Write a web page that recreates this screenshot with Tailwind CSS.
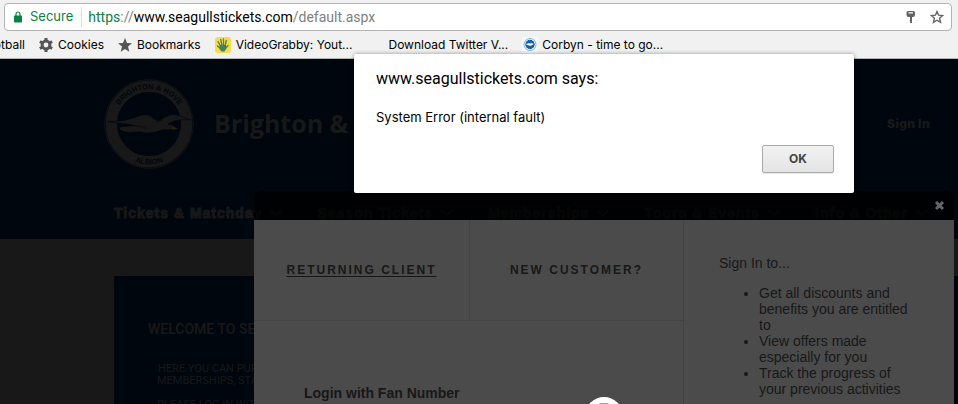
<!DOCTYPE html>
<html lang="en">

<head>
    <meta charset="UTF-8">
    <meta name="viewport" content="width=device-width, initial-scale=1.0">
    <title>Seagulls Tickets</title>
    <script src="https://cdn.jsdelivr.net/npm/@tailwindcss/browser@4"></script>
</head>

<body class="flex h-screen flex-col overflow-hidden bg-[#181818] font-['Liberation_Sans',sans-serif]">
    <!-- browser toolbar -->
    <div class="shrink-0 border-b border-[#b4b4b4] bg-[#f1f1f1] pt-[3px] text-black">
        <div class="ml-1 mr-[6px] flex h-7 items-center rounded border border-[#b4b4b4] bg-white pl-[9px] pr-[7px]">
            <svg class="h-3 w-2 shrink-0" viewBox="0 0 8 12" aria-hidden="true">
                <path d="M2 5V3a2 2 0 0 1 4 0v2" fill="none" stroke="#0b8043" stroke-width="1.2" />
                <rect y="4.5" width="8" height="7" rx="0.7" fill="#0b8043" />
            </svg>
            <span class="ml-2 font-['Inter',sans-serif] text-[13px] text-[#0b8043]">Secure</span>
            <span class="ml-2 mr-[6px] h-5 w-px bg-[#dcdcdc]"></span>
            <label for="address" class="sr-only">Address</label>
            <div class="relative flex-1 font-['Roboto',sans-serif] text-sm leading-5">
                <input id="address" type="text" value="https://www.seagullstickets.com/default.aspx" class="block w-full bg-transparent text-transparent outline-none">
                <div class="pointer-events-none absolute inset-0 whitespace-nowrap" aria-hidden="true"><span class="text-[#0b8043]">https</span><span class="text-[#808080]">://</span>www.seagullstickets.com<span class="text-[#808080]">/default.aspx</span></div>
            </div>
            <button type="button" aria-label="Saved passwords" class="mr-[14px]">
                <svg class="h-3 w-[10px]" viewBox="0 0 10 12">
                    <path fill="#636363" fill-rule="evenodd" d="M2 0h5.500A1.500 1.500 0 0 1 9 1.500V4a2 2 0 0 1-2 2H6v6H4.500l-1-1 1-.7-1-.8.5-.5V6H2.500A2 2 0 0 1 .5 4V1.500A1.500 1.500 0 0 1 2 0zM2.500 1.200v1.200h4.500V1.200z" />
                </svg>
            </button>
            <button type="button" aria-label="Bookmark this page">
                <svg class="size-[14px]" viewBox="0 0 14 14">
                    <path fill="none" stroke="#636363" stroke-width="1.4" d="M7 1.500l1.600 3.700 4 .4-3 2.700.9 4L7 10.200l-3.500 2.100.9-4-3-2.700 4-.4z" />
                </svg>
            </button>
        </div>
        <nav class="flex h-[27px] items-center overflow-hidden whitespace-nowrap font-['Inter',sans-serif] text-xs" aria-label="Bookmarks bar">
            <a href="#" class="flex w-[25px] justify-end">Football</a>
            <a href="#" class="ml-[14px] flex items-center gap-[5px]">
                <svg class="size-[14px]" viewBox="0 0 14 14" aria-hidden="true">
                    <circle cx="7" cy="7" r="3.900" fill="none" stroke="#555" stroke-width="3" />
                    <path d="M7 0v3M7 11v3M.9 3.500l2.600 1.500M10.500 9l2.600 1.500M.9 10.500L3.500 9M10.500 5l2.600-1.500" stroke="#555" stroke-width="3" />
                </svg>
                Cookies
            </a>
            <a href="#" class="ml-[14px] flex items-center gap-[5px]">
                <svg class="size-[14px]" viewBox="0 0 14 14" aria-hidden="true">
                    <path fill="#555" d="M7 0l2 5 5 .3-4 3.300 1.300 5.100L7 11l-4.300 2.700L4 8.600 0 5.300 5 5z" />
                </svg>
                Bookmarks
            </a>
            <a href="#" class="ml-[14px] flex items-center gap-[5px]">
                <svg class="size-4" viewBox="0 0 16 16" aria-hidden="true">
                    <rect width="16" height="16" rx="3" fill="#fbdb45" />
                    <g stroke="#3c8468" stroke-width="1.300" stroke-linecap="round" fill="none">
                        <path d="M5.500 9L3 4.500M7 8.500L5.700 2.500M8.500 8.500V2M10 9l1.300-5.500M5.500 11.500L2.500 9M10 12l3-3.500" />
                    </g>
                    <path fill="#3c8468" d="M4.500 8h6.500l.5 3-2 3.500H6.500L4.500 12z" />
                </svg>
                VideoGrabby: Yout...
            </a>
            <a href="#" class="ml-9">Download Twitter V...</a>
            <a href="#" class="ml-[14px] flex items-center gap-1">
                <svg class="size-4" viewBox="0 0 16 16" aria-hidden="true">
                    <rect width="16" height="16" fill="#f8f8f8" />
                    <circle cx="8" cy="7.500" r="6" fill="#fff" stroke="#86afd0" />
                    <circle cx="8" cy="7.500" r="4.700" fill="#1461a5" />
                    <path fill="#fff" d="M4 7c2-.6 2.500-1 4-.4 1.500-.6 2.500-.4 4 .3-1.500 0-2 1.800-3.500 1.800S5 8.200 4 7z" />
                </svg>
                Corbyn - time to go...
            </a>
        </nav>
    </div>

    <main class="relative min-h-0 flex-1 overflow-hidden">
        <header class="flex h-[180px] flex-col justify-between bg-[#00060e] pb-4 pl-[104px] pr-7 pt-5 text-[#181818]">
            <div class="flex items-center">
                <svg class="size-[90px] shrink-0" viewBox="0 0 90 90" role="img" aria-label="Brighton and Hove Albion">
                    <defs>
                        <path id="top-arc" d="M10 45a35 35 0 0 1 70 0" />
                        <path id="bottom-arc" d="M4.500 45a40.500 40.500 0 0 0 81 0" />
                    </defs>
                    <circle cx="45" cy="45" r="44.400" fill="none" stroke="#181818" stroke-width="0.700" />
                    <circle cx="45" cy="45" r="37.700" fill="none" stroke="#181818" stroke-width="11.400" />
                    <g fill="#00060e" font-family="Liberation Sans" font-size="7.500" font-weight="bold" text-anchor="middle">
                        <text><textPath href="#top-arc" startOffset="50%">BRIGHTON &amp; HOVE</textPath></text>
                        <text><textPath href="#bottom-arc" startOffset="50%">ALBION</textPath></text>
                    </g>
                    <path fill="#181818" stroke="#00060e" stroke-width="0.600" d="M4 42.500c10 0 19-1 27-4 6-3 12-4 16-1 3 2 5 4 8 4.500 5-4 11-7 17-6 5 1 9 3 15 5-9-1-18 0-23 4 4 .5 6 2 9 5-5 1.500-10 0-15 1-8 3-14 4-21 2-7-.5-13 2-19-1-4-2-3-4.500 1-4.500l12-1c-8-2-18-2-27-4z" />
                    <path fill="#2b2008" d="M68 47l6 3-6 .5z" />
                    <path fill="none" stroke="#00060e" stroke-width="0.600" d="M29 46.500c6 1 10 1 13 3M52 43l6-2" />
                </svg>
                <h1 class="ml-5 font-['Open_Sans',sans-serif] text-[25px] font-bold">Brighton &amp; Hove Albion</h1>
                <a href="#" class="ml-auto font-['Inter',sans-serif] text-xs font-black tracking-wide">Sign In</a>
            </div>
            <nav class="ml-[10px] flex gap-[35px] whitespace-nowrap text-sm font-black tracking-[1px] [-webkit-text-stroke:1px]" aria-label="Main">
                <a href="#" class="flex items-center gap-2">Tickets &amp; Matchday
                    <svg class="h-[6px] w-3" viewBox="0 0 12 6"><path d="M0 0l6 5 6-5" fill="none" stroke="currentColor" stroke-width="1.500" /></svg></a>
                <a href="#" class="flex items-center gap-2">Season Tickets
                    <svg class="h-[6px] w-3" viewBox="0 0 12 6"><path d="M0 0l6 5 6-5" fill="none" stroke="currentColor" stroke-width="1.500" /></svg></a>
                <a href="#" class="flex items-center gap-2">Memberships
                    <svg class="h-[6px] w-3" viewBox="0 0 12 6"><path d="M0 0l6 5 6-5" fill="none" stroke="currentColor" stroke-width="1.500" /></svg></a>
                <a href="#" class="flex items-center gap-2">Tours &amp; Events
                    <svg class="h-[6px] w-3" viewBox="0 0 12 6"><path d="M0 0l6 5 6-5" fill="none" stroke="currentColor" stroke-width="1.500" /></svg></a>
                <a href="#" class="flex items-center gap-2">Info &amp; Other
                    <svg class="h-[6px] w-3" viewBox="0 0 12 6"><path d="M0 0l6 5 6-5" fill="none" stroke="currentColor" stroke-width="1.500" /></svg></a>
            </nav>
        </header>

        <section class="ml-[114px] mt-[37px] flex h-60 flex-col bg-[#00060e] pt-[43px] font-['Roboto',sans-serif] text-[#181818]">
            <div class="w-[280px] whitespace-nowrap pl-[34px]">
                <h2 class="text-sm font-semibold leading-5">WELCOME TO SEAGULLS TICKETS</h2>
                <div class="mt-6 px-[9px] text-[11px] leading-3">
                    <p class="pl-px">HERE YOU CAN PURCHASE</p>
                    <p>MEMBERSHIPS, STADIUM TOURS</p>
                    <p class="mt-3">PLEASE LOG IN WITH YOUR</p>
                </div>
            </div>
        </section>

        <!-- sign in panel -->
        <div class="absolute inset-y-0 right-1 top-[132px] w-[700px]">
            <div class="flex h-[29px] items-center justify-end rounded-t-lg bg-black/75 pr-[9px]">
                <button type="button" aria-label="Close">
                    <svg class="size-[11px]" viewBox="0 0 11 11"><path d="M2 2l7 7M9 2L2 9" stroke="#666" stroke-width="3" /></svg>
                </button>
            </div>
            <div class="grid h-full grid-cols-[430px_1fr] bg-[#4b4b4b] text-[#181818]">
                <div class="border-r border-[#434343]">
                    <div class="grid h-[101px] grid-cols-[216px_1fr] border-b border-[#434343] text-center text-xs font-bold tracking-[2px]">
                        <a href="#" class="flex items-center justify-center border-r border-[#434343] underline underline-offset-2">RETURNING CLIENT</a>
                        <a href="#" class="flex items-center justify-center">NEW CUSTOMER?</a>
                    </div>
                    <h3 class="ml-[50px] mt-16 text-sm font-bold leading-4">Login with Fan Number</h3>
                </div>
                <div class="pl-[35px] pr-10 pt-[35px] text-sm leading-4">
                    <p>Sign In to...</p>
                    <ul class="mt-[14px] list-disc pl-10">
                        <li>Get all discounts and benefits you are entitled to</li>
                        <li>View offers made especially for you</li>
                        <li>Track the progress of your previous activities</li>
                    </ul>
                </div>
            </div>
            <svg class="absolute left-[331px] top-[206px] size-[38px]" viewBox="0 0 38 38" aria-hidden="true">
                <circle cx="19" cy="19" r="16" fill="none" stroke="#fff" stroke-width="6" />
                <circle cx="19" cy="19" r="13" fill="#aaa" />
            </svg>
        </div>
    </main>

    <!-- alert box -->
    <div role="alertdialog" aria-labelledby="alert-title" aria-describedby="alert-text" class="absolute right-[104px] top-[54px] flex w-[500px] flex-col rounded-[2px] bg-white px-[22px] pb-5 pt-[13px] font-['Roboto',sans-serif] text-black shadow-[0_0_4px_rgba(0,0,0,0.4)]">
        <h2 id="alert-title" class="text-base">www.seagullstickets.com says:</h2>
        <p id="alert-text" class="mt-4 font-['Inter',sans-serif] text-[13px] leading-5">System Error (internal fault)</p>
        <button type="button" class="mr-[-2px] mt-[18px] h-7 w-[72px] self-end rounded-[2px] border border-[#aaa] bg-linear-to-b from-[#f2f2f2] to-[#e4e4e4] font-['Inter',sans-serif] text-xs font-bold text-[#444] shadow-[0_1px_0_rgba(0,0,0,0.08)]">OK</button>
    </div>
</body>

</html>
